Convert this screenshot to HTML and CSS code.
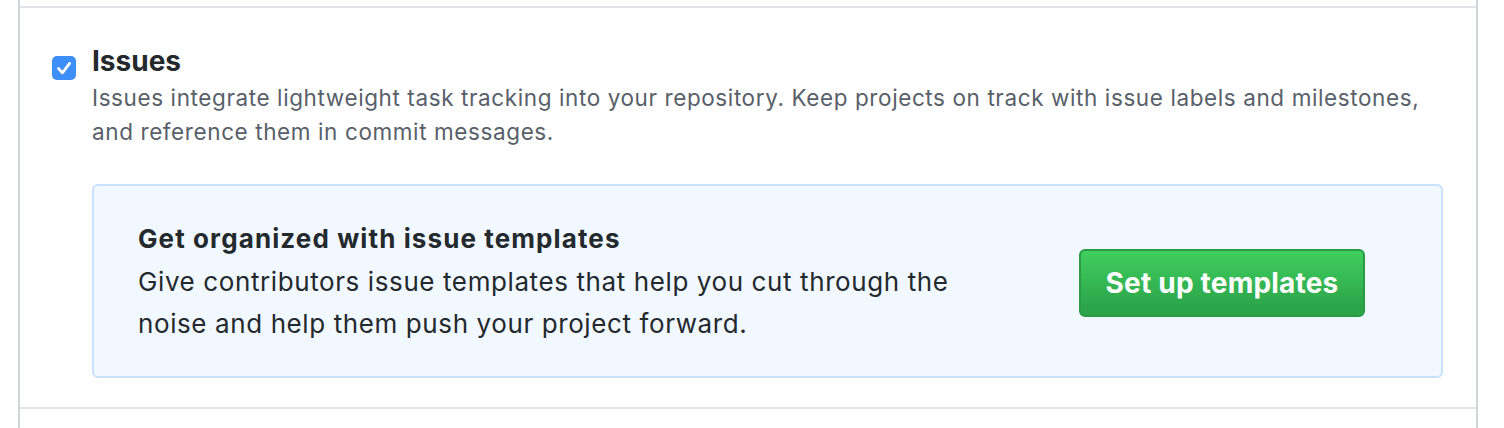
FILE: index.html
```html
<!DOCTYPE html>
<html lang="en">
<head>
    <meta charset="UTF-8">
    <meta name="viewport" content="width=device-width, initial-scale=1.0">
    <title>Repository features</title>
    <link rel="stylesheet" href="styles.css">
</head>
<body>

<div class="features">
    <div class="feature-row feature-prev"></div>
    <div class="feature-row">
        <label class="feature-check">
            <input type="checkbox" checked>
            <span class="check-box">
                <svg viewBox="0 0 24 24" width="24" height="24"><path d="M6.5 12.6l3.9 4.2L17.6 7.4" fill="none" stroke="#fff" stroke-width="2.8" stroke-linecap="round" stroke-linejoin="round"/></svg>
            </span>
        </label>
        <div class="feature-body">
            <h3 class="feature-title">Issues</h3>
            <p class="feature-desc">Issues integrate lightweight task tracking into your repository. Keep projects on track with issue labels and milestones, and reference them in commit messages.</p>
            <div class="feature-callout">
                <div class="callout-text">
                    <h4>Get organized with issue templates</h4>
                    <p>Give contributors issue templates that help you cut through the noise and help them push your project forward.</p>
                </div>
                <button class="btn-primary">Set up templates</button>
            </div>
        </div>
    </div>
    <div class="feature-row feature-next"></div>
</div>

</body>
</html>
```

FILE: styles.css
```css
body {
    margin: 0;
    background-color: #fff;
    font-family: Inter, "Liberation Sans", Arial, sans-serif;
    color: #24292e;
}
.features {
    margin: 0 26px 0 18px;
    border-left: 2px solid #d1d5da;
    border-right: 2px solid #d1d5da;
}
.feature-row {
    display: flex;
    padding: 36px 33px 29px 32px;
    border-bottom: 2px solid #e1e4e8;
}
.feature-prev {
    padding: 0;
    height: 6px;
}
.feature-next {
    padding: 0;
    height: 30px;
    border-bottom: none;
}
.feature-check {
    position: relative;
    width: 24px;
    height: 24px;
    margin-top: 12px;
    margin-right: 16px;
    flex-shrink: 0;
}
.feature-check input {
    position: absolute;
    opacity: 0;
    margin: 0;
}
.check-box {
    display: block;
    width: 24px;
    height: 24px;
    border-radius: 5px;
    background-color: #3d8ef7;
}
.check-box svg {
    display: block;
}
.feature-body {
    flex: 1;
}
.feature-title {
    margin: 0 0 3px;
    font-size: 28px;
    line-height: 34px;
    font-weight: 700;
}
.feature-desc {
    margin: 0;
    font-size: 22.5px;
    line-height: 34px;
    letter-spacing: 0.6px;
    color: #586069;
}
.feature-callout {
    display: flex;
    justify-content: space-between;
    align-items: center;
    margin-top: 35px;
    padding: 34px 76px 31px 44px;
    background-color: #f1f8ff;
    border: 2px solid #c8e1ff;
    border-radius: 6px;
}
.callout-text {
    width: 830px;
}
.callout-text h4 {
    margin: 0;
    font-size: 26px;
    line-height: 38px;
    font-weight: 700;
    letter-spacing: 1.1px;
}
.callout-text p {
    margin: 3px 0 0;
    font-size: 26px;
    line-height: 42px;
    letter-spacing: 0.6px;
}
.btn-primary {
    width: 286px;
    height: 68px;
    font-family: inherit;
    font-size: 28px;
    font-weight: 700;
    letter-spacing: 0.2px;
    color: #fff;
    background-image: linear-gradient(-180deg, #3fce5e 0%, #2ca44a 90%);
    border: 2px solid #2a9a45;
    border-radius: 6px;
    cursor: pointer;
}
```
